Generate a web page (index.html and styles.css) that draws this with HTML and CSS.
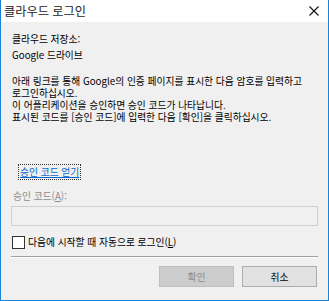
FILE: index.html
```html
<!DOCTYPE html>
<html lang="ko">
<head>
    <meta charset="UTF-8">
    <title>클라우드 로그인</title>
    <link rel="stylesheet" href="styles.css">
</head>
<body>
<div class="window">
    <div class="titlebar">
        <span class="title">클라우드 로그인</span>
        <svg class="close" width="10" height="10" viewBox="0 0 10 10">
            <path d="M0.5 0.5 L9.5 9.5 M9.5 0.5 L0.5 9.5" stroke="#111" stroke-width="1.1" fill="none"/>
        </svg>
    </div>
    <div class="content">
        <div class="storage">
            <div>클라우드 저장소:</div>
            <div>Google 드라이브</div>
        </div>
        <div class="desc">
            <div>아래 링크를 통해 Google의 인증 페이지를 표시한 다음 암호를 입력하고</div>
            <div>로그인하십시오.</div>
            <div>이 어플리케이션을 승인하면 승인 코드가 나타납니다.</div>
            <div>표시된 코드를 [승인 코드]에 입력한 다음 [확인]을 클릭하십시오.</div>
        </div>
        <div class="link-row">
            <a href="#" class="code-link">승인 코드 얻기</a>
        </div>
        <div class="code-label">승인 코드(<u>A</u>):</div>
        <input type="text" class="code-input" disabled>
        <label class="auto-login">
            <span class="check"></span>
            <span>다음에 시작할 때 자동으로 로그인(<u>L</u>)</span>
        </label>
        <div class="separator"></div>
        <div class="buttons">
            <button class="btn" disabled>확인</button>
            <button class="btn">취소</button>
        </div>
    </div>
</div>
</body>
</html>
```

FILE: styles.css
```css
body {
    margin: 0;
    padding: 0;
    font-family: "Noto Sans CJK KR", "Noto Sans", sans-serif;
    font-size: 9.75px;
    color: #000;
}
.window {
    width: 329px;
    height: 301px;
    box-sizing: border-box;
    border: 1px solid #1883d7;
    border-top: none;
    background-color: #f0f0f0;
    display: flex;
    flex-direction: column;
}
.titlebar {
    height: 22px;
    background-color: #fff;
    display: flex;
    align-items: center;
    justify-content: space-between;
    padding: 0 9px 0 3px;
}
.title {
    font-size: 12.2px;
    line-height: 22px;
    color: #222;
}
.close {
    display: block;
    margin-top: -1px;
}
.content {
    flex: 1;
    padding: 9px 10px 0 10px;
    display: flex;
    flex-direction: column;
}
.storage {
    line-height: 16px;
    padding-left: 1px;
}
.desc {
    margin: 12px 0 0 1px;
    line-height: 12px;
    white-space: nowrap;
}
.desc div {
    height: 12px;
}
.link-row {
    margin-top: 43px;
    padding-left: 8px;
    line-height: 12px;
}
.code-link {
    color: #0066cc;
    text-decoration: underline;
    outline: 1px dotted #333;
    outline-offset: 0;
    padding: 0 1px;
}
.code-label {
    margin: 12px 0 0 2px;
    line-height: 12px;
    color: #8d8d8d;
}
.code-input {
    margin-top: 4px;
    height: 20px;
    box-sizing: border-box;
    border: 1px solid #d0d0d0;
    background-color: #f0f0f0;
    padding: 0;
}
.auto-login {
    margin-top: 10px;
    display: flex;
    align-items: center;
    gap: 3px;
    line-height: 13px;
    padding-left: 1px;
}
.check {
    width: 13px;
    height: 13px;
    box-sizing: border-box;
    border: 1px solid #333;
    background-color: #fff;
}
.separator {
    margin-top: 7px;
    border-top: 1px solid #a0a0a0;
    border-bottom: 1px solid #fff;
}
.buttons {
    margin-top: 8px;
    display: flex;
    justify-content: flex-end;
    gap: 8px;
    padding-right: 1px;
}
.btn {
    width: 75px;
    height: 21px;
    box-sizing: border-box;
    border: 1px solid #adadad;
    background-color: #e1e1e1;
    font-family: inherit;
    font-size: 9.75px;
    color: #000;
    padding: 0;
}
.btn:disabled {
    background-color: #cccccc;
    border-color: #bfbfbf;
    color: #8a8a8a;
}
```
